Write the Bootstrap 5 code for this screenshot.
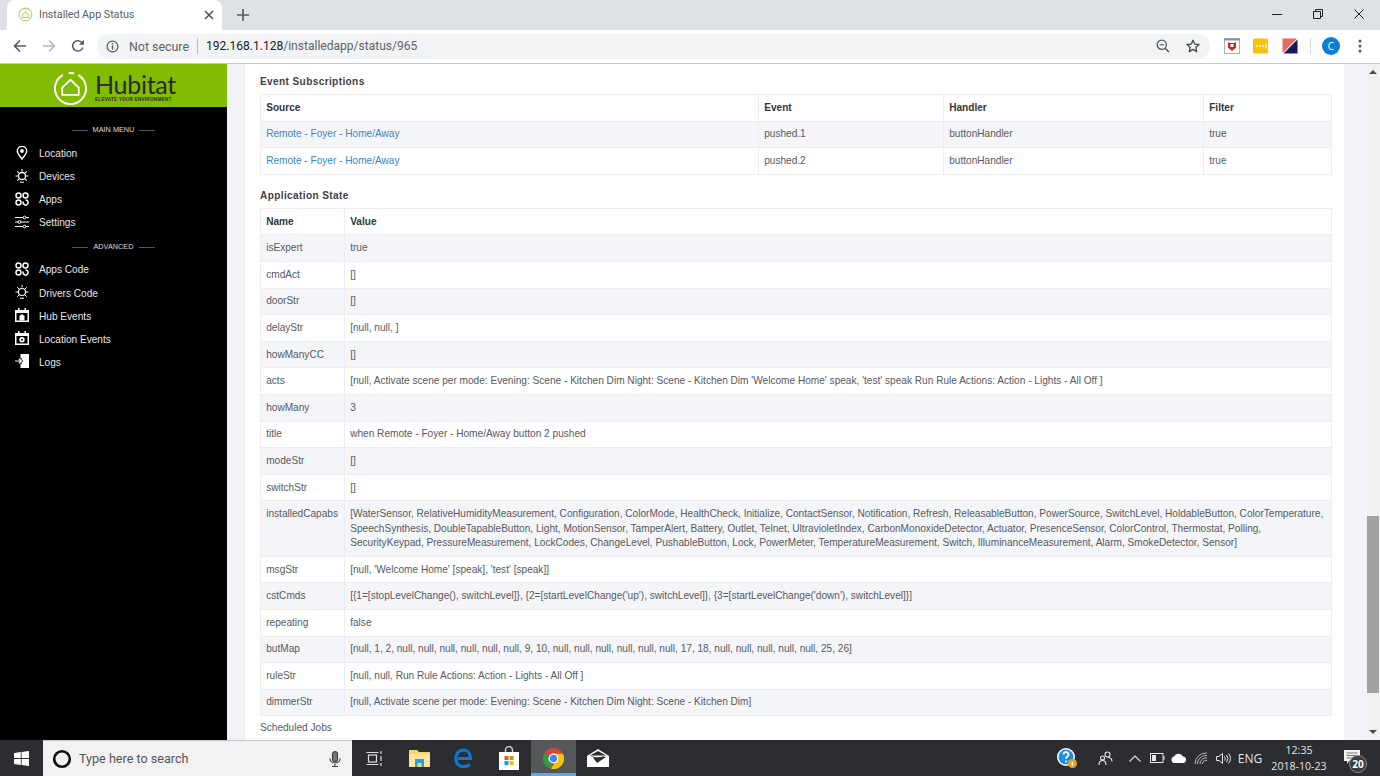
<!DOCTYPE html>
<html lang="en">
<head>
<meta charset="utf-8">
<title>Installed App Status</title>
<link rel="stylesheet" href="https://cdn.jsdelivr.net/npm/bootstrap@5.3.0/dist/css/bootstrap.min.css">
<style>
html,body{height:100%;overflow:hidden;background:#fff}
body{font-family:"Liberation Sans",Arial,sans-serif;font-size:10.1px;line-height:14.4px;color:#575962}
.shell{height:776px;width:1380px}
.tabstrip{height:30px;background:#dee1e6;flex:none;padding-right:1px}
.tabitem{width:215px;margin-left:7px;background:#fff;border-radius:8px 8px 0 0;padding-left:11px;padding-right:8px;font:10.8px Roboto,sans-serif;letter-spacing:-.05px;color:#5a5e63;padding-bottom:1px}
.tabitem .ttl{margin-left:6px}
.newtab{width:42px}
.winbtn{width:41px;padding-bottom:3px}
.toolbar{height:34px;background:#fff;border-bottom:1px solid #c9cacc;flex:none;padding-left:5px;padding-bottom:1px}
.tool{width:29px}
.omni{height:25px;width:1113px;margin-left:5px;margin-right:7px;background:#f1f3f4;border-radius:13px;font:12.4px Roboto,sans-serif;color:#5f6368;padding-left:9px;padding-right:10px}
.omni .sep{width:1px;height:16px;background:#b9bbbe;margin:0 8px 0 8px}
.omni .host{color:#202124}
.omni .notsec{margin-left:10px}
.omni .addr{font-size:12.05px}
.ext{width:29px}
.avatar{width:18px;height:18px;border-radius:50%;background:#0b7fd3;color:#fff;font:10px "Open Sans",sans-serif}
.tsep{width:1px;height:16px;background:#d5d6d8;margin:0 11px 0 6px}
.kebab{margin-left:18px}
.main{flex:1 1 0;min-height:0}
.side{width:227px;background:#000;flex:none;color:#dcdcdc}
.brand{height:43px;background:#82bc00;color:#262626;padding-top:5px;padding-left:2px;overflow:hidden}
.brand .wm{font:400 25px/25px "Lato",sans-serif;letter-spacing:-.3px;color:#2a2a2a}
.brand .tag{font:700 4.7px/6px "Liberation Sans",sans-serif;letter-spacing:.2px;color:#2a2a2a}
.brandtxt{margin-left:7px;margin-top:-1px}
.menuhead{font:400 7.3px/10px "Liberation Sans",sans-serif;color:#ddd}
.menuhead i{display:block;width:16px;height:1px;background:#555;margin:0 5px}
.head1{margin-top:11px;height:24.8px}
.head2{height:24.2px}
.sideitem{height:23.05px;padding-left:15px;color:#e6e6e6;font-size:10.1px}
.sideitem svg{width:14px;height:14px;margin-right:10px;margin-top:-3px;flex:none}
.gut{width:18px;background:#f2f3f8;flex:none}
.gutr{width:22px;background:#f2f3f8;flex:none}
.pagebody{flex:1 1 0;min-width:0;padding:11.3px 12px 0 15px;overflow:hidden;background:#fff}
.sect{font-weight:700;color:#3f4047;font-size:10.1px;letter-spacing:.37px;margin-bottom:4.3px}
.sect2{margin-top:13.8px;margin-bottom:4.8px}
.datatbl{table-layout:fixed;--bs-table-color:#575962;--bs-table-bg:#fff;--bs-table-border-color:#ebedf2;--bs-table-striped-bg:#f4f5f8;--bs-table-striped-color:#575962;font-size:10.1px;line-height:14.4px;margin-bottom:0;width:1072px}
.datatbl.table>:not(caption)>*>*{padding:5.8px 5.2px 5.4px}
.datatbl th{font-weight:700;color:#33353b}
.datatbl a{color:#3d85c6;text-decoration:none}
.c1{width:498px}.c2{width:185px}.c3{width:260px}
.n1{width:84px}
.sched{margin-top:5px}
.scroller{width:14px;background:#f1f1f1;flex:none}
.arrowup{width:0;height:0;border-left:4px solid transparent;border-right:4px solid transparent;border-bottom:4px solid #4d4d4d}
.arrowdn{width:0;height:0;border-left:4px solid transparent;border-right:4px solid transparent;border-top:4px solid #4d4d4d}
.sbtn{height:16px}
.thumb{height:177px;margin:436px 1px 0;background:#a3a3a3}
.taskbar{height:36px;background:#2b2d30;flex:none;color:#e8e8e8}
.startb{width:43px}
.searchbox{width:309px;background:#f2f2f2;color:#555;font:12.6px Roboto,sans-serif;padding-left:9px;padding-right:11px;border-top:1px solid #c8c8c8}
.searchbox .lbl{margin-left:7px}
.tile{width:44.8px;height:36px}
.tile.on{background:#565759;border-bottom:3px solid #5fa8e8;padding-top:3px}
.tray{font:12px "Open Sans",sans-serif;color:#e6e6e6}
.tc38{width:38px}.tc22{width:22px}.tc32{width:32px}.tc66{width:66px}.tc40{width:40px}.tc8{width:8px}
.clock{font-size:10.6px;line-height:16.5px}
.notifcell{padding-bottom:2px}
.notifwrap{position:relative}
.notifnum{position:absolute;left:5px;top:5px;width:18px;height:18px;border-radius:50%;background:#3a3c3f;border:1px solid #8a8a8a;color:#fff;font:700 10px/16px "Open Sans",sans-serif;text-align:center}
</style>
</head>
<body>
<div class="shell d-flex flex-column">
  <div class="tabstrip d-flex align-items-stretch">
    <div class="tabitem d-flex align-items-center">
      <svg width="15" height="15" viewBox="0 0 16 16" fill="none"><circle cx="8" cy="8" r="6.8" stroke="#a9d46a" stroke-width="1.1"/><path d="M4.500 8.500 8 5.200l3.500 3.300v2.600h-7z" stroke="#b7da80" stroke-width="1.100" fill="#f2f8e6"/></svg>
      <span class="ttl flex-grow-1">Installed App Status</span>
      <svg width="10" height="10" viewBox="0 0 10 10"><path d="M1 1l8 8M9 1l-8 8" stroke="#4a4d51" stroke-width="1.500"/></svg>
    </div>
    <div class="newtab d-flex align-items-center justify-content-center"><svg width="12" height="12" viewBox="0 0 12 12"><path d="M6 0v12M0 6h12" stroke="#55585c" stroke-width="1.600"/></svg></div>
    <div class="flex-grow-1"></div>
    <div class="winbtn d-flex align-items-center justify-content-center"><svg width="10" height="10" viewBox="0 0 10 10"><path d="M0 5.500h10" stroke="#222" stroke-width="1"/></svg></div>
    <div class="winbtn d-flex align-items-center justify-content-center"><svg width="10" height="10" viewBox="0 0 10 10" fill="none"><path d="M.5 2.500h7v7h-7zM2.500 2.500v-2h7v7h-2" stroke="#222"/></svg></div>
    <div class="winbtn d-flex align-items-center justify-content-center"><svg width="10" height="10" viewBox="0 0 10 10"><path d="M.5.5l9 9M9.500.5l-9 9" stroke="#222" stroke-width="1"/></svg></div>
  </div>
  <div class="toolbar d-flex align-items-center">
    <div class="tool d-flex justify-content-center"><svg width="14" height="14" viewBox="0 0 14 14" fill="none"><path d="M13 7H2M7 1.500 1.500 7 7 12.500" stroke="#55585c" stroke-width="1.600"/></svg></div>
    <div class="tool d-flex justify-content-center"><svg width="14" height="14" viewBox="0 0 14 14" fill="none"><path d="M1 7h11M7 1.500 12.500 7 7 12.500" stroke="#b4b6b9" stroke-width="1.600"/></svg></div>
    <div class="tool d-flex justify-content-center"><svg width="14" height="14" viewBox="0 0 14 14" fill="none"><path d="M11.800 8.500A5.200 5.200 0 1 1 10.600 3.200L12.500 5" stroke="#55585c" stroke-width="1.500"/><path d="M13 .8v5H8z" fill="#55585c"/></svg></div>
    <div class="omni d-flex align-items-center">
      <svg width="13" height="13" viewBox="0 0 14 14" fill="none"><circle cx="7" cy="7" r="5.800" stroke="#55585c" stroke-width="1.300"/><path d="M7 6v4.300" stroke="#55585c" stroke-width="1.500"/><circle cx="7" cy="4" r=".9" fill="#55585c"/></svg>
      <span class="notsec">Not secure</span><span class="sep"></span>
      <span class="addr"><span class="host">192.168.1.128</span>/installedapp/status/965</span>
      <span class="flex-grow-1"></span>
      <svg class="me-3" width="14" height="14" viewBox="0 0 14 14" fill="none"><circle cx="5.800" cy="5.800" r="4.600" stroke="#55585c" stroke-width="1.300"/><path d="M9.200 9.200 13 13" stroke="#55585c" stroke-width="1.500"/><path d="M3.600 5.800h4.400" stroke="#55585c" stroke-width="1.100"/></svg>
      <svg width="14" height="14" viewBox="0 0 14 14" fill="none"><path d="M7 1.200 8.700 5.100l4.300.4-3.200 2.900.9 4.200L7 10.400l-3.700 2.200.9-4.200L1 5.500l4.300-.4z" stroke="#45484c" stroke-width="1.300" stroke-linejoin="round"/></svg>
    </div>
    <div class="ext d-flex justify-content-center"><svg width="16" height="16" viewBox="0 0 16 16"><rect x=".5" y=".5" width="15" height="15" fill="#fff" stroke="#a8adb3"/><path d="M.5.5h15v2H.5z" fill="#7d94a8"/><path d="M4 4l2 1h4l2-1v5.500L8 13 4 9.500z" fill="#c5281c"/><rect x="6.400" y="6" width="3.200" height="3" fill="#fff"/></svg></div>
    <div class="ext d-flex justify-content-center"><svg width="16" height="16" viewBox="0 0 16 16"><rect width="15" height="15" y=".5" rx="1.500" fill="#f4c20d"/><circle cx="4" cy="8" r="1" fill="#fff"/><circle cx="7" cy="8" r="1" fill="#fff"/><circle cx="10" cy="8" r="1" fill="#fff"/><path d="M12.500 5.500a4 4 0 0 1 0 5" stroke="#fff" fill="none"/></svg></div>
    <div class="ext d-flex justify-content-center"><svg width="16" height="16" viewBox="0 0 16 16"><path d="M.5 .5H15L.5 15z" fill="#e96a5e"/><path d="M15.500 1.500V15.500H1.500z" fill="#15195e"/></svg></div>
    <div class="tsep"></div>
    <div class="avatar d-flex align-items-center justify-content-center">C</div>
    <div class="kebab d-flex"><svg width="4" height="14" viewBox="0 0 4 14" fill="#55585c"><circle cx="2" cy="2" r="1.500"/><circle cx="2" cy="7" r="1.500"/><circle cx="2" cy="12" r="1.500"/></svg></div>
  </div>
  <div class="main d-flex">
    <aside class="side d-flex flex-column">
      <div class="brand d-flex align-items-center justify-content-center">
        <svg width="35" height="35" viewBox="0 0 36 36" fill="none"><path d="M9.500 4.500A16 16 0 1 0 26.500 4.500" stroke="#fff" stroke-width="2" stroke-linecap="round"/><path d="M17 2a16 16 0 0 1 4 .3" stroke="#fff" stroke-width="2" stroke-linecap="round"/><path d="M9.500 17 18 9l8.500 8v7.500h-17z" stroke="#fff" stroke-width="1.800" stroke-linejoin="round"/></svg>
        <div class="brandtxt"><div class="wm">Hubitat</div><div class="tag">ELEVATE YOUR ENVIRONMENT</div></div>
      </div>
      <div class="menuhead head1 d-flex align-items-center justify-content-center"><i></i>MAIN MENU<i></i></div>
      <nav class="nav flex-column">
        <a class="sideitem d-flex align-items-center text-decoration-none"><svg viewBox="0 0 14 14" fill="none"><path d="M7 13C4.800 10 2.300 7.600 2.300 5a4.700 4.700 0 0 1 9.400 0C11.700 7.600 9.200 10 7 13z" stroke="#fff" stroke-width="1.400"/><circle cx="7" cy="5" r="1.900" fill="#fff"/></svg>Location</a>
        <a class="sideitem d-flex align-items-center text-decoration-none"><svg viewBox="0 0 14 14" fill="none" stroke="#fff"><circle cx="7" cy="7" r="3.500" stroke-width="1.300"/><path d="M7 0v2.500M.5 7h2.500M11 7h2.500M2.300 2.300l1.800 1.800M11.700 2.300 9.900 4.100M2.300 11.700l1.800-1.800M11.700 11.700 9.900 9.900M5 13.300h4" stroke-width="1.100"/></svg>Devices</a>
        <a class="sideitem d-flex align-items-center text-decoration-none"><svg viewBox="0 0 14 14" fill="none" stroke="#fff" stroke-width="1.500"><circle cx="3.500" cy="3.500" r="2.500"/><circle cx="10.500" cy="3.500" r="2.500"/><circle cx="3.500" cy="10.500" r="2.500"/><path d="M8.300 9.500a2.500 2.500 0 1 0 2.200-1.500"/></svg>Apps</a>
        <a class="sideitem d-flex align-items-center text-decoration-none"><svg viewBox="0 0 14 14" fill="none" stroke="#fff" stroke-width="1"><path d="M0 2.500h8M11 2.500h3M0 7h3M6 7h8M0 11.500h8M11 11.500h3"/><circle cx="9.500" cy="2.500" r="1.400"/><circle cx="4.500" cy="7" r="1.400"/><circle cx="9.500" cy="11.500" r="1.400"/></svg>Settings</a>
      </nav>
      <div class="menuhead head2 d-flex align-items-center justify-content-center"><i></i>ADVANCED<i></i></div>
      <nav class="nav flex-column">
        <a class="sideitem d-flex align-items-center text-decoration-none"><svg viewBox="0 0 14 14" fill="none" stroke="#fff" stroke-width="1.500"><circle cx="3.500" cy="3.500" r="2.500"/><circle cx="10.500" cy="3.500" r="2.500"/><circle cx="3.500" cy="10.500" r="2.500"/><path d="M8.300 9.500a2.500 2.500 0 1 0 2.200-1.500"/></svg>Apps Code</a>
        <a class="sideitem d-flex align-items-center text-decoration-none"><svg viewBox="0 0 14 14" fill="none" stroke="#fff"><circle cx="7" cy="7" r="3.500" stroke-width="1.100"/><path d="M7 0v2.500M.5 7h2.500M11 7h2.500M2.300 2.300l1.800 1.800M11.700 2.300 9.900 4.100M2.300 11.700l1.800-1.800M11.700 11.700 9.900 9.900M5 13.300h4" stroke-width="1"/></svg>Drivers Code</a>
        <a class="sideitem d-flex align-items-center text-decoration-none"><svg viewBox="0 0 14 14"><path d="M0 2h3V0h1.500v2h5V0H11v2h3v12H0z" fill="#fff"/><path d="M1.500 5h11v7.500h-11z" fill="#000"/><path d="M4.500 12.500V8L7 6l2.500 2v4.500z" fill="#fff"/></svg>Hub Events</a>
        <a class="sideitem d-flex align-items-center text-decoration-none"><svg viewBox="0 0 14 14"><path d="M0 2h3V0h1.500v2h5V0H11v2h3v12H0z" fill="#fff"/><path d="M1.500 5h11v7.500h-11z" fill="#000"/><circle cx="7" cy="8.700" r="2.700" fill="#fff"/><circle cx="7" cy="8.700" r="1" fill="#000"/></svg>Location Events</a>
        <a class="sideitem d-flex align-items-center text-decoration-none"><svg viewBox="0 0 14 14"><path d="M5.500 0H14v14H5.500V9.800h1.200V8.200l1.700-1.200-1.700-1.200V4.200H5.500z" fill="#fff"/><path d="M0 7h6M4 4.800 6.500 7 4 9.200" fill="none" stroke="#fff" stroke-width="1.200"/></svg>Logs</a>
      </nav>
    </aside>
    <div class="gut"></div>
    <main class="pagebody">
      <div class="sect">Event Subscriptions</div>
      <table class="table table-bordered table-striped datatbl">
        <colgroup><col class="c1"><col class="c2"><col class="c3"><col></colgroup>
        <thead><tr><th>Source</th><th>Event</th><th>Handler</th><th>Filter</th></tr></thead>
        <tbody>
          <tr><td><a href="#">Remote - Foyer - Home/Away</a></td><td>pushed.1</td><td>buttonHandler</td><td>true</td></tr>
          <tr><td><a href="#">Remote - Foyer - Home/Away</a></td><td>pushed.2</td><td>buttonHandler</td><td>true</td></tr>
        </tbody>
      </table>
      <div class="sect sect2">Application State</div>
      <table class="table table-bordered table-striped datatbl">
        <colgroup><col class="n1"><col></colgroup>
        <thead><tr><th>Name</th><th>Value</th></tr></thead>
        <tbody>
          <tr><td>isExpert</td><td>true</td></tr>
          <tr><td>cmdAct</td><td>[]</td></tr>
          <tr><td>doorStr</td><td>[]</td></tr>
          <tr><td>delayStr</td><td>[null, null, ]</td></tr>
          <tr><td>howManyCC</td><td>[]</td></tr>
          <tr><td>acts</td><td>[null, Activate scene per mode: Evening: Scene - Kitchen Dim Night: Scene - Kitchen Dim 'Welcome Home' speak, 'test' speak Run Rule Actions: Action - Lights - All Off ]</td></tr>
          <tr><td>howMany</td><td>3</td></tr>
          <tr><td>title</td><td>when Remote - Foyer - Home/Away button 2 pushed</td></tr>
          <tr><td>modeStr</td><td>[]</td></tr>
          <tr><td>switchStr</td><td>[]</td></tr>
          <tr><td>installedCapabs</td><td>[WaterSensor, RelativeHumidityMeasurement, Configuration, ColorMode, HealthCheck, Initialize, ContactSensor, Notification, Refresh, ReleasableButton, PowerSource, SwitchLevel, HoldableButton, ColorTemperature, SpeechSynthesis, DoubleTapableButton, Light, MotionSensor, TamperAlert, Battery, Outlet, Telnet, UltravioletIndex, CarbonMonoxideDetector, Actuator, PresenceSensor, ColorControl, Thermostat, Polling, SecurityKeypad, PressureMeasurement, LockCodes, ChangeLevel, PushableButton, Lock, PowerMeter, TemperatureMeasurement, Switch, IlluminanceMeasurement, Alarm, SmokeDetector, Sensor]</td></tr>
          <tr><td>msgStr</td><td>[null, 'Welcome Home' [speak], 'test' [speak]]</td></tr>
          <tr><td>cstCmds</td><td>[{1=[stopLevelChange(), switchLevel]}, {2=[startLevelChange('up'), switchLevel]}, {3=[startLevelChange('down'), switchLevel]}]</td></tr>
          <tr><td>repeating</td><td>false</td></tr>
          <tr><td>butMap</td><td>[null, 1, 2, null, null, null, null, null, null, 9, 10, null, null, null, null, null, null, 17, 18, null, null, null, null, null, 25, 26]</td></tr>
          <tr><td>ruleStr</td><td>[null, null, Run Rule Actions: Action - Lights - All Off ]</td></tr>
          <tr><td>dimmerStr</td><td>[null, Activate scene per mode: Evening: Scene - Kitchen Dim Night: Scene - Kitchen Dim]</td></tr>
        </tbody>
      </table>
      <div class="sched">Scheduled Jobs</div>
    </main>
    <div class="gutr"></div>
    <div class="scroller d-flex flex-column">
      <div class="sbtn d-flex align-items-center justify-content-center"><div class="arrowup"></div></div>
      <div class="thumb"></div>
      <div class="flex-grow-1"></div>
      <div class="sbtn d-flex align-items-center justify-content-center"><div class="arrowdn"></div></div>
    </div>
  </div>
  <footer class="taskbar d-flex align-items-stretch">
    <div class="startb d-flex align-items-center justify-content-center"><svg width="15" height="15" viewBox="0 0 15 15" fill="#fff"><path d="M0 2.100 6.800 1.100v6H0zM7.600 1 15 0v7.100H7.600zM0 7.900h6.800v6L0 12.900zM7.600 7.900H15V15l-7.400-1z"/></svg></div>
    <div class="searchbox d-flex align-items-center">
      <svg width="20" height="20" viewBox="0 0 20 20" fill="none"><circle cx="10" cy="10" r="7.800" stroke="#111" stroke-width="2.600"/></svg>
      <span class="lbl flex-grow-1">Type here to search</span>
      <svg width="12" height="16" viewBox="0 0 12 16" fill="none" stroke="#444" stroke-width="1.200"><rect x="3.500" y=".7" width="5" height="10" rx="2.500" fill="#777"/><path d="M1 7.500c0 6 10 6 10 0M6 13v2.500M3 15.500h6"/></svg>
    </div>
    <div class="tile d-flex align-items-center justify-content-center"><svg width="16" height="15" viewBox="0 0 16 15" fill="none" stroke="#ddd" stroke-width="1.200"><rect x="2.500" y="4" width="8" height="7"/><path d="M.5 1.500h12M.5 13.500h12M15 0v3M15 5v5M15 12v3"/></svg></div>
    <div class="tile d-flex align-items-center justify-content-center"><svg width="21" height="18" viewBox="0 0 21 18"><path d="M0 1h8l2 2h11v15H0z" fill="#f6d26b"/><path d="M0 5h21v13H0z" fill="#fce49a"/><path d="M6 10h9v8H6z" fill="#2a9fe0"/><path d="M8.500 14h4v4h-4z" fill="#f6d26b"/></svg></div>
    <div class="tile d-flex align-items-center justify-content-center"><svg width="19" height="20" viewBox="0 0 19 20" fill="none"><path d="M4 10.500H16.500C16.500 5.500 13.500 2 9.300 2 5 2 1.800 5.500 1.800 10.500c0 5 3.300 8 7.700 8 2.700 0 4.800-.7 6.500-1.800" stroke="#0a78d7" stroke-width="3.200"/></svg></div>
    <div class="tile d-flex align-items-center justify-content-center"><svg width="22" height="24" viewBox="0 0 22 24"><path d="M7.500 6V4a3.500 3.500 0 0 1 7 0v2" fill="none" stroke="#ccc" stroke-width="1.500"/><path d="M1 6h20v18H1z" fill="#fff"/><path d="M6.500 10h4v4h-4z" fill="#f25022"/><path d="M11.500 10h4v4h-4z" fill="#7fba00"/><path d="M6.500 15h4v4h-4z" fill="#00a4ef"/><path d="M11.500 15h4v4h-4z" fill="#ffb900"/></svg></div>
    <div class="tile on d-flex align-items-center justify-content-center"><svg width="21" height="21" viewBox="0 0 20 20"><circle cx="10" cy="10" r="10" fill="#db4437"/><path d="M10 10 1.400 5A10 10 0 0 0 7.500 19.700z" fill="#2a9d47"/><path d="M10 5.500h9A10 10 0 0 1 7.500 19.700L13 12z" fill="#f4c20d"/><circle cx="10" cy="10" r="4.700" fill="#fff"/><circle cx="10" cy="10" r="3.500" fill="#4285f4"/></svg></div>
    <div class="tile d-flex align-items-center justify-content-center"><svg width="22" height="18" viewBox="0 0 22 18"><path d="M0 7 11 0l11 7v11H0z" fill="#fff"/><path d="M3 6.500 11 11l8-4.500L11 2z" fill="#2b2d30"/><path d="M3 6.500h16L10 9z" fill="#fff"/><path d="M6 8.500 19 8l-9 6z" fill="#2b2d30"/></svg></div>
    <div class="flex-grow-1"></div>
    <div class="tray d-flex align-items-stretch">
      <div class="tc38 d-flex align-items-center justify-content-center"><svg width="22" height="22" viewBox="0 0 22 22"><circle cx="10" cy="10" r="9" fill="#fff"/><circle cx="10" cy="10" r="7.500" fill="#1c8fe0"/><path d="M7.500 7.500a2.500 2.500 0 1 1 3.500 2.300c-.8.400-1 .8-1 2" stroke="#fff" stroke-width="1.800" fill="none"/><circle cx="10" cy="14.500" r="1.100" fill="#fff"/><circle cx="16.500" cy="16.500" r="4.500" fill="#f0a020"/><path d="M16.500 15v4" stroke="#fff" stroke-width="1.400"/></svg></div>
      <div class="tc38 d-flex align-items-center justify-content-center"><svg width="15" height="15" viewBox="0 0 15 15" fill="none" stroke="#e6e6e6" stroke-width="1.100"><circle cx="9.500" cy="3.500" r="2.500"/><circle cx="4.500" cy="7" r="2"/><path d="M1 14c0-3 1.500-4.500 3.500-4.500S8 11 8 14M10 6.500c2.500 0 4 1.500 4 4"/></svg></div>
      <div class="tc22 d-flex align-items-center justify-content-center"><svg width="12" height="7" viewBox="0 0 12 7" fill="none"><path d="M.5 6.500 6 1l5.500 5.500" stroke="#e6e6e6" stroke-width="1.100"/></svg></div>
      <div class="tc22 d-flex align-items-center justify-content-center"><svg width="15" height="10" viewBox="0 0 15 10" fill="none"><rect x=".5" y=".5" width="12.500" height="9" stroke="#e6e6e6"/><rect x="2" y="2" width="4" height="6" fill="#e6e6e6"/><path d="M14 3v4" stroke="#e6e6e6"/></svg></div>
      <div class="tc22 d-flex align-items-center justify-content-center"><svg width="16" height="10" viewBox="0 0 16 10" fill="#fff"><path d="M3.500 10a3.300 3.300 0 0 1-.5-6.500A5 5 0 0 1 12 3.500 3.300 3.300 0 0 1 12.500 10z"/></svg></div>
      <div class="tc22 d-flex align-items-center justify-content-center"><svg width="14" height="13" viewBox="0 0 14 13" fill="none" stroke="#bbb"><path d="M1 12A11 11 0 0 1 13 1M3.500 12A8.500 8.500 0 0 1 13 3.500M6 12a6 6 0 0 1 7-6M8.500 12A3.500 3.500 0 0 1 13 8.500"/></svg></div>
      <div class="tc22 d-flex align-items-center justify-content-center"><svg width="15" height="13" viewBox="0 0 15 13" fill="none" stroke="#e6e6e6"><path d="M.5 4.500h2.500L6.500 1.500v10L3 8.500H.5zM8.500 4.500a3 3 0 0 1 0 4M10.500 3a5.500 5.500 0 0 1 0 7M12.500 1.500a8 8 0 0 1 0 10"/></svg></div>
      <div class="tc32 d-flex align-items-center justify-content-center">ENG</div>
      <div class="tc66 clock d-flex align-items-center justify-content-center text-center"><div>12:35<br>2018-10-23</div></div>
      <div class="tc40 notifcell d-flex align-items-center justify-content-center">
        <div class="notifwrap d-flex"><svg width="16" height="14" viewBox="0 0 16 14"><path d="M0 0h16v11H5l-2 3v-3H0z" fill="#f2f2f2"/><path d="M2.500 3h11M2.500 5.500h11M2.500 8h7" stroke="#777"/></svg><span class="notifnum">20</span></div>
      </div>
      <div class="tc8"></div>
    </div>
  </footer>
</div>
<script src="https://cdn.jsdelivr.net/npm/bootstrap@5.3.0/dist/js/bootstrap.bundle.min.js"></script>
</body>
</html>
